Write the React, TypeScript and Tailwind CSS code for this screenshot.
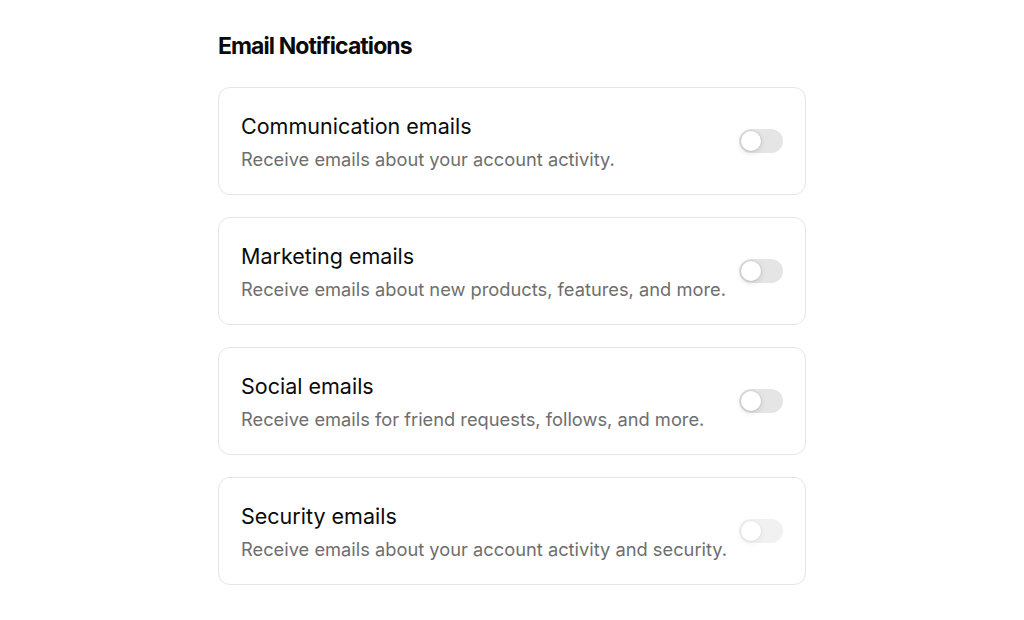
import type { FC } from "react";

interface NotificationRowProps {
  title: string;
  description: string;
  disabled?: boolean;
}

const Toggle: FC<{ disabled?: boolean }> = ({ disabled }) => {
  return (
    <button
      type="button"
      role="switch"
      aria-checked={false}
      disabled={disabled}
      className={
        disabled
          ? "inline-flex h-6 w-11 shrink-0 items-center rounded-full border-2 border-transparent bg-[#e5e5e5] opacity-50"
          : "inline-flex h-6 w-11 shrink-0 items-center rounded-full border-2 border-transparent bg-[#e5e5e5]"
      }
    >
      <span className="block h-5 w-5 rounded-full bg-white shadow-[0_0_0_1px_rgba(0,0,0,0.06),0_2px_6px_rgba(0,0,0,0.12)]" />
    </button>
  );
};

const NotificationRow: FC<NotificationRowProps> = ({
  title,
  description,
  disabled
}) => {
  return (
    <div className="flex items-center justify-between rounded-xl border border-[#e5e5e5] bg-white px-[22px] pt-[22px] pb-[23px]">
      <div className="flex flex-col">
        <p className="text-[21.5px] leading-8 text-[#0a0a0a]">{title}</p>
        <p className="mt-[5px] text-[18.3px] leading-6 text-[#6e6e6e]">
          {description}
        </p>
      </div>
      <Toggle disabled={disabled} />
    </div>
  );
};

export default function App() {
  return (
    <div
      className="min-h-screen bg-white"
      style={{ fontFamily: "Inter, 'Noto Sans', sans-serif" }}
    >
      <div className="mx-auto w-[588px] pt-[32px]">
        <h2 className="text-[23px] font-bold leading-7 tracking-[-0.04em] text-[#0a0a0a]">
          Email Notifications
        </h2>

        <div className="mt-[27px] flex flex-col gap-[22px]">
          <NotificationRow
            title="Communication emails"
            description="Receive emails about your account activity."
          />
          <NotificationRow
            title="Marketing emails"
            description="Receive emails about new products, features, and more."
          />
          <NotificationRow
            title="Social emails"
            description="Receive emails for friend requests, follows, and more."
          />
          <NotificationRow
            title="Security emails"
            description="Receive emails about your account activity and security."
            disabled
          />
        </div>
      </div>
    </div>
  );
}
